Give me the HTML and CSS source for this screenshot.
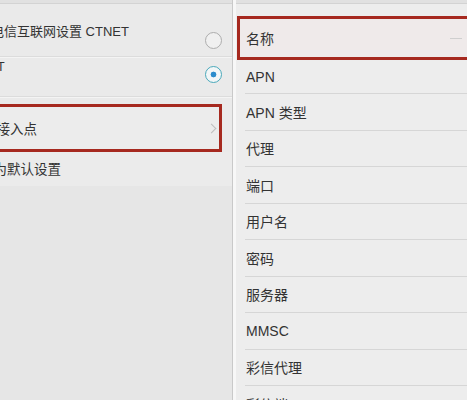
FILE: index.html
```html
<!DOCTYPE html>
<html lang="zh-CN">
<head>
<meta charset="utf-8">
<title>APN</title>
<link rel="stylesheet" href="styles.css">
</head>
<body>
<div class="screen">
  <section class="pane pane-left">
    <div class="pane-top"></div>
    <div class="left-list">
      <div class="apn apn-first">
        <div class="apn-text">
          <div class="apn-name">中国电信互联网设置 CTNET</div>
        </div>
        <span class="radio"></span>
      </div>
      <div class="apn apn-second">
        <div class="apn-text">
          <div class="apn-frag">CTNET</div>
        </div>
        <span class="radio on"></span>
      </div>
      <div class="menu-row boxed"><span class="menu-label">新建接入点</span><span class="chev"></span></div>
      <div class="menu-row reset"><span class="menu-label">重置为默认设置</span></div>
    </div>
  </section>
  <div class="divider"></div>
  <section class="pane pane-right">
    <div class="pane-top"></div>
    <div class="field-list">
      <div class="field boxed-field"><span class="field-label">名称</span><span class="field-hint"></span></div>
      <div class="field first-plain">APN</div>
      <div class="field">APN 类型</div>
      <div class="field">代理</div>
      <div class="field">端口</div>
      <div class="field">用户名</div>
      <div class="field">密码</div>
      <div class="field">服务器</div>
      <div class="field">MMSC</div>
      <div class="field">彩信代理</div>
      <div class="field">彩信端口</div>
    </div>
  </section>
</div>
</body>
</html>
```
FILE: styles.css
```css
* { box-sizing: border-box; }
html, body {
  margin: 0;
  padding: 0;
  width: 467px;
  height: 400px;
  overflow: hidden;
  background: #e6e6e6;
}
body {
  font-family: "Liberation Sans", "Noto Sans CJK SC", sans-serif;
  color: #333;
}
.screen {
  display: flex;
  width: 467px;
  height: 400px;
  overflow: hidden;
}
.pane {
  display: flex;
  flex-direction: column;
  overflow: hidden;
}
.pane-top {
  height: 4px;
  flex: none;
  background: #e1e1e1;
  border-bottom: 1px solid #d3d3d3;
}
.pane-left {
  width: 232px;
  flex: none;
  background: #e6e6e6;
}
.left-list {
  margin-left: -40px;
  width: 272px;
  background: #eaeaea;
}
.apn {
  display: flex;
  justify-content: space-between;
  align-items: flex-start;
  padding-right: 10px;
  border-bottom: 1px solid #dcdcdc;
  box-shadow: 0 1px 0 #f4f4f4;
}
.apn-first { height: 53px; padding-left: 5px; }
.apn-second { height: 40px; padding-left: 3px; }
.apn-name {
  font-size: 13px;
  line-height: 18px;
  padding-top: 19px;
  white-space: nowrap;
}
.apn-frag {
  font-size: 12.5px;
  line-height: 14px;
  padding-top: 3px;
  white-space: nowrap;
}
.radio {
  flex: none;
  width: 17px;
  height: 17px;
  border-radius: 50%;
  border: 1px solid #adadad;
  background: #f0f0f0;
  margin-top: 28px;
}
.apn-second .radio { margin-top: 9px; }
.radio.on {
  border: 1.5px solid #4aa9bb;
  background: radial-gradient(circle, #2b8ccc 0 2.6px, #f2f6f7 3.2px);
}
.menu-row {
  display: flex;
  align-items: center;
  justify-content: space-between;
  font-size: 13.5px;
  white-space: nowrap;
}
.boxed {
  margin-top: 7px;
  margin-right: 10px;
  height: 48px;
  border: 3px solid #a6291f;
  background: #ececec;
  padding-left: 6.5px;
  padding-right: 2px;
}
.chev {
  width: 7px;
  height: 7px;
  border-top: 1px solid #bdbdbd;
  border-right: 1px solid #bdbdbd;
  transform: rotate(45deg);
  margin-right: 2px;
}
.reset {
  height: 34px;
  padding-left: 6.5px;
  padding-bottom: 3px;
  background: #ebebeb;
}
.divider {
  width: 4px;
  flex: none;
  border-left: 1px solid #c9c9c9;
  background: #f7f7f7;
}
.pane-right {
  flex: 1;
  background: #ededed;
}
.field-list {
  padding-top: 12px;
  display: flex;
  flex-direction: column;
}
.field {
  margin-left: 9px;
  height: 36.5px;
  flex: none;
  display: flex;
  align-items: center;
  padding-left: 1px;
  font-size: 14px;
  border-bottom: 1px solid #d6d6d6;
  white-space: nowrap;
}
.boxed-field {
  margin-left: 1px;
  margin-right: -10px;
  height: 44px;
  border: 3px solid #a6291f;
  background: #efeaea;
  padding-left: 6px;
  justify-content: space-between;
}
.field-hint {
  width: 12px;
  height: 1px;
  background: #cfcfcf;
  margin-right: 12px;
}
.first-plain { height: 34px; }
```
